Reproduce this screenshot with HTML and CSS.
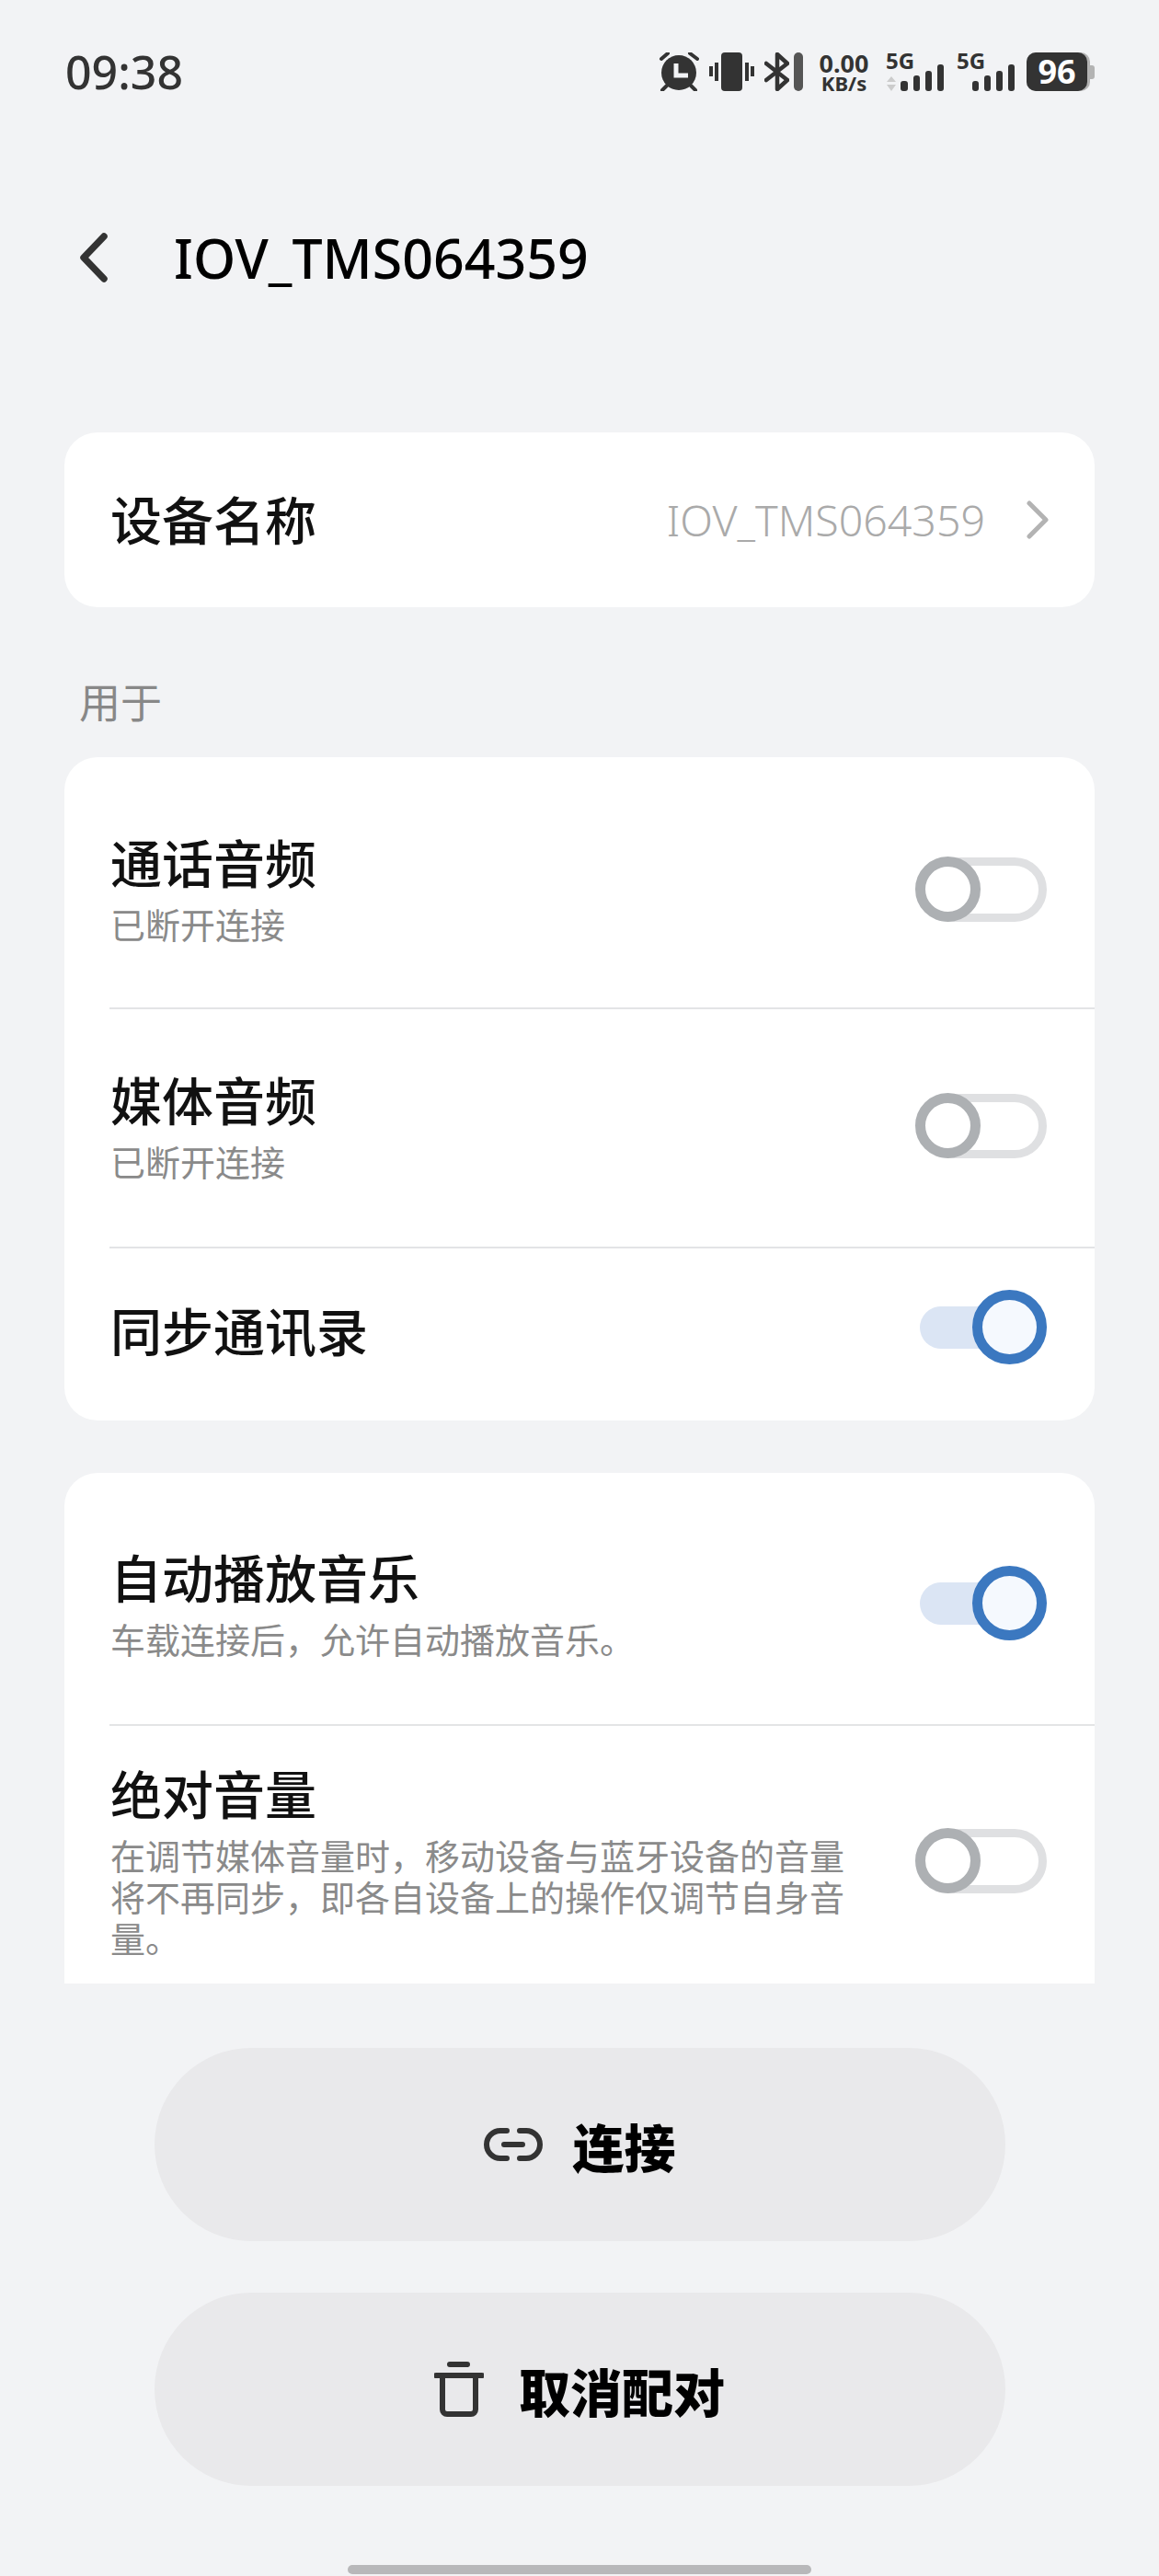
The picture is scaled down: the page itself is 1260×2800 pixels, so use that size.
FILE: index.html
```html
<!DOCTYPE html>
<html>
<head>
  <meta charset="UTF-8">
  <title>IOV_TMS064359</title>
  <link rel="stylesheet" href="styles.css">
</head>
<body>

  <!-- Status bar -->
  <div class="statusbar">
    <span class="time">09:38</span>
    <div class="status-icons">
      <svg width="44" height="42" viewBox="0 0 44 42">
        <circle cx="22" cy="22" r="19" fill="#333"/>
        <path d="M3 7L10 1M34 1L42 7M4 41L9 36M40 41L35 36" stroke="#333" stroke-width="4" fill="none" stroke-linecap="round"/>
        <path d="M19 12V25H32" stroke="#f2f3f5" stroke-width="5" fill="none"/>
      </svg>
      <svg width="49" height="42" viewBox="0 0 49 42">
        <rect x="13" y="0" width="23" height="42" rx="4" fill="#333"/>
        <path d="M2 15V26M8 11V31M41 11V31M47 15V26" stroke="#333" stroke-width="4" fill="none"/>
      </svg>
      <svg width="27" height="42" viewBox="0 0 27 42">
        <path d="M2 12L25 30L14 40V2L25 12L2 30" stroke="#333" stroke-width="4.5" fill="none" stroke-linejoin="round" stroke-linecap="round"/>
      </svg>
      <span class="bt-pill"></span>
      <div class="speed">
        <span class="speed-num">0.00</span>
        <span class="speed-unit">KB/s</span>
      </div>
      <div class="signal">
        <span class="signal-text">5G</span>
        <svg width="63" height="42" viewBox="0 0 63 42">
          <path d="M6 26L11 32H1ZM1 35H11L6 42Z" fill="#ccc"/>
          <rect x="16" y="31" width="8" height="11" rx="3" fill="#333"/>
          <rect x="30" y="25" width="7" height="17" rx="3" fill="#333"/>
          <rect x="43" y="20" width="7" height="22" rx="3" fill="#333"/>
          <rect x="56" y="13" width="7" height="29" rx="3" fill="#333"/>
        </svg>
      </div>
      <div class="signal signal-2">
        <span class="signal-text">5G</span>
        <svg width="63" height="42" viewBox="0 0 63 42">
          <rect x="17" y="31" width="7" height="11" rx="3" fill="#333"/>
          <rect x="30" y="25" width="7" height="17" rx="3" fill="#333"/>
          <rect x="43" y="20" width="7" height="22" rx="3" fill="#333"/>
          <rect x="56" y="13" width="7" height="29" rx="3" fill="#333"/>
        </svg>
      </div>
      <div class="battery">
        <div class="battery-body"><div class="battery-fill">96</div></div>
        <span class="battery-tab"></span>
      </div>
    </div>
  </div>

  <!-- Title -->
  <div class="header">
    <svg class="back" width="32" height="54" viewBox="0 0 32 54">
      <path d="M27 4L5 27L27 50" stroke="#333" stroke-width="7.5" fill="none" stroke-linecap="round" stroke-linejoin="round"/>
    </svg>
    <h1 class="title">IOV_TMS064359</h1>
  </div>

  <div class="card name-card">
    <span class="row-title">设备名称</span>
    <span class="value">IOV_TMS064359</span>
    <svg class="chevron" width="26" height="42" viewBox="0 0 26 42">
      <path d="M4 3L22 21L4 39" stroke="#b3b3b3" stroke-width="5" fill="none" stroke-linecap="round" stroke-linejoin="round"/>
    </svg>
  </div>

  <div class="section-label">用于</div>

  <div class="card">
    <div class="row row-call">
      <div class="row-text">
        <div class="row-title">通话音频</div>
        <div class="row-sub">已断开连接</div>
      </div>
      <span class="toggle toggle-call"></span>
    </div>
    <div class="divider"></div>
    <div class="row row-media">
      <div class="row-text">
        <div class="row-title">媒体音频</div>
        <div class="row-sub">已断开连接</div>
      </div>
      <span class="toggle toggle-media"></span>
    </div>
    <div class="divider"></div>
    <div class="row row-sync">
      <div class="row-text">
        <div class="row-title">同步通讯录</div>
      </div>
      <span class="toggle on"></span>
    </div>
  </div>

  <div class="card card-clip">
    <div class="row row-auto">
      <div class="row-text">
        <div class="row-title">自动播放音乐</div>
        <div class="row-sub">车载连接后，允许自动播放音乐。</div>
      </div>
      <span class="toggle on"></span>
    </div>
    <div class="divider"></div>
    <div class="row row-volume">
      <div class="row-text">
        <div class="row-title">绝对音量</div>
        <div class="row-sub row-desc">在调节媒体音量时，移动设备与蓝牙设备的音量将不再同步，即各自设备上的操作仅调节自身音量。</div>
      </div>
      <span class="toggle toggle-volume"></span>
    </div>
  </div>

  <div class="actions">
    <button class="action">
      <svg width="64" height="36" viewBox="0 0 64 36">
        <path d="M25 3H18A15 15 0 0 0 18 33H25M39 3H46A15 15 0 0 1 46 33H39M22 18H42" stroke="#333" stroke-width="6" fill="none" stroke-linecap="round"/>
      </svg>
      连接
    </button>
    <button class="action action-gap">
      <svg width="54" height="60" viewBox="0 0 54 60">
        <path d="M17 3H36M2 15H52" stroke="#333" stroke-width="6" fill="none" stroke-linecap="round"/>
        <path d="M9 15V52A5 5 0 0 0 14 57H40A5 5 0 0 0 45 52V15" stroke="#333" stroke-width="6" fill="none"/>
      </svg>
      取消配对
    </button>
  </div>

  <div class="home-bar"></div>

</body>
</html>
```

FILE: styles.css
```css
body {
  margin: 0;
  width: 1260px;
  height: 2800px;
  overflow: hidden;
  background-color: #f2f3f5;
  font-family: "Noto Sans", "Noto Sans CJK SC", sans-serif;
  color: #111;
}

.statusbar {
  display: flex;
  justify-content: space-between;
  padding: 57px 70px 0 71px;
  height: 42px;
}

.time {
  font-size: 50px;
  line-height: 42px;
  font-weight: 500;
  color: #333;
}

.status-icons {
  display: flex;
  gap: 11px;
}

.bt-pill {
  width: 10px;
  height: 42px;
  margin-left: -6px;
  border-radius: 5px;
  background-color: #555;
}

.speed {
  display: flex;
  flex-direction: column;
  align-items: center;
  width: 51px;
  margin-left: 8px;
  color: #333;
  font-weight: 700;
}

.speed-num {
  font-size: 27px;
  line-height: 24px;
}

.speed-unit {
  font-size: 22px;
  line-height: 18px;
}

.signal {
  display: flex;
  margin-left: 9px;
}

.signal-2 {
  margin-left: 3px;
}

.signal-text {
  width: 30px;
  height: 18px;
  margin-right: -30px;
  font-size: 24px;
  line-height: 18px;
  font-weight: 700;
  color: #333;
}

.battery {
  display: flex;
  align-items: center;
  margin-left: 2px;
}

.battery-body {
  width: 69px;
  height: 42px;
  border-radius: 10px;
  background-color: #b3b3b3;
}

.battery-fill {
  width: 66px;
  height: 42px;
  border-radius: 10px;
  background-color: #333;
  color: #fff;
  font-size: 36px;
  font-weight: 700;
  line-height: 42px;
  text-align: center;
}

.battery-tab {
  width: 5px;
  height: 15px;
  border-radius: 0 3px 3px 0;
  background-color: #b3b3b3;
}

.header {
  display: flex;
  align-items: center;
  height: 58px;
  margin-top: 152px;
  padding-left: 86px;
}

.back {
  flex: none;
}

.title {
  margin: 0 0 0 71px;
  font-size: 59px;
  line-height: 58px;
  font-weight: 500;
  color: #000;
}

.card {
  margin: 0 70px;
  background-color: #fff;
  border-radius: 36px;
}

.name-card {
  display: flex;
  align-items: center;
  height: 190px;
  margin-top: 161px;
  padding: 0 49px 0 50px;
}

.name-card .row-title {
  flex: 1;
}

.value {
  font-size: 46.5px;
  font-weight: 300;
  color: #aaa;
  margin-right: 44px;
}

.section-label {
  margin: 74px 0 29px 86px;
  font-size: 45px;
  line-height: 60px;
  color: #888;
}

.card + .card {
  margin-top: 57px;
}

.row {
  display: flex;
  align-items: flex-start;
  justify-content: space-between;
  padding-left: 50px;
  padding-right: 52px;
}

.row-title {
  font-size: 56px;
  line-height: 72px;
  font-weight: 500;
  color: #111;
}

.row-sub {
  margin-top: 9px;
  font-size: 38px;
  line-height: 45px;
  color: #8a8a8a;
}

.row-desc {
  width: 800px;
}

.row-call {
  height: 193px;
  padding-top: 79px;
}

.row-media {
  height: 195px;
  padding-top: 63px;
}

.row-sync {
  align-items: center;
  height: 187px;
}

.row-sync .row-text {
  margin-bottom: 8px;
}

.row-sync .toggle {
  margin-bottom: 16px;
}

.row-auto {
  height: 195px;
  padding-top: 78px;
}

.row-auto .toggle {
  margin-top: 41px;
}

.row-volume {
  padding-top: 38px;
  padding-bottom: 25px;
}

.toggle-call {
  margin-top: 30px;
}

.toggle-media {
  margin-top: 29px;
}

.toggle-volume {
  margin-top: 74px;
}

.divider {
  height: 2px;
  margin-left: 49px;
  background-color: #e3e4e6;
}

.card-clip {
  height: 555px;
  border-radius: 36px 36px 0 0;
  overflow: hidden;
}

/* toggle: ring knob over a pill track */
.toggle {
  position: relative;
  flex: none;
  box-sizing: border-box;
  width: 142px;
  height: 70px;
  border: 9px solid #dfe0e2;
  border-radius: 35px;
  background-color: #fff;
}

.toggle::after {
  content: "";
  position: absolute;
  left: -10px;
  top: -10px;
  box-sizing: border-box;
  width: 71px;
  height: 71px;
  border: 11px solid #adb0b3;
  border-radius: 50%;
  background-color: #fff;
}

.toggle.on {
  width: 138px;
  height: 46px;
  border: none;
  border-radius: 23px;
  background-color: #dbe5f4;
}

.toggle.on::after {
  left: 57px;
  top: -18px;
  width: 81px;
  height: 81px;
  border-color: #3b78c0;
  background-color: #f5f9fe;
}

.actions {
  display: flex;
  flex-direction: column;
  align-items: center;
  gap: 56px;
  margin-top: 70px;
}

.action {
  display: flex;
  align-items: center;
  justify-content: center;
  gap: 33px;
  width: 925px;
  height: 210px;
  border: none;
  border-radius: 105px;
  background-color: #e9e9eb;
  font-family: inherit;
  font-size: 56px;
  font-weight: 900;
  color: #000;
}

.action-gap {
  gap: 38px;
}

.home-bar {
  width: 504px;
  height: 10px;
  margin: 86px auto 0;
  border-radius: 5px;
  background-color: #b8b8ba;
}
```
